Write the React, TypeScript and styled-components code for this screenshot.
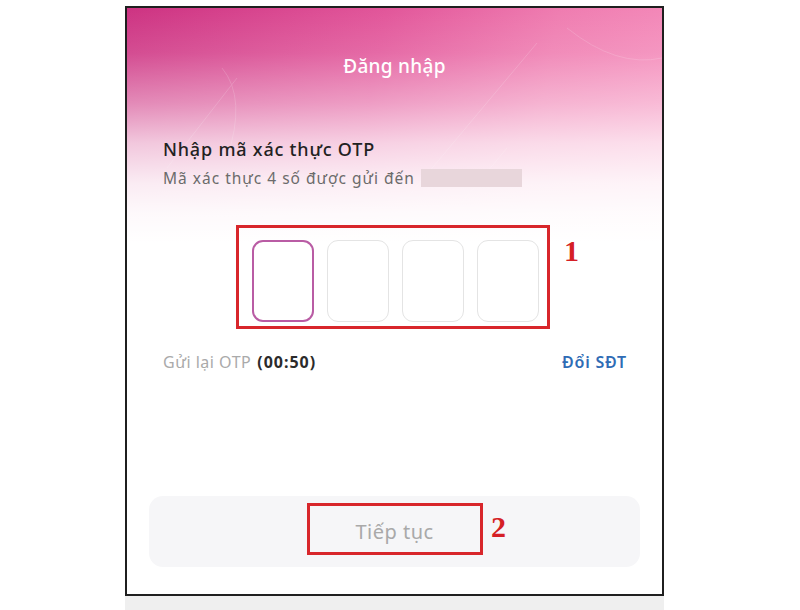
import React from "react";
import styled, { createGlobalStyle } from "styled-components";

const GlobalStyles = createGlobalStyle`
  html, body {
    margin: 0;
    padding: 0;
    background: #ffffff;
  }
  body {
    font-family: "Noto Sans", "Open Sans", sans-serif;
  }
`;

const Page = styled.div`
  width: 800px;
  height: 610px;
  padding: 6px 0 0 125px;
  box-sizing: border-box;
  overflow: hidden;
  display: flex;
  flex-direction: column;
`;

const Phone = styled.div`
  position: relative;
  width: 539px;
  height: 591px;
  box-sizing: border-box;
  border: 2px solid #1f1f1f;
  background-color: #ffffff;
  background-image: linear-gradient(
      to bottom,
      rgba(255, 255, 255, 0) 0px,
      rgba(255, 255, 255, 0.12) 45px,
      rgba(255, 255, 255, 0.42) 95px,
      rgba(255, 255, 255, 0.72) 135px,
      rgba(255, 255, 255, 0.9) 175px,
      rgba(255, 255, 255, 0.97) 205px,
      #ffffff 235px
    ),
    linear-gradient(100deg, #cd3382 0%, #e2569a 45%, #ef7cb0 75%, #f58cbb 100%);
  background-size: 100% 240px, 100% 240px;
  background-repeat: no-repeat;
  display: flex;
  flex-direction: column;
  padding-bottom: 27px;
`;

const BottomStrip = styled.div`
  width: 539px;
  height: 14px;
  background: #efefef;
`;

const Decor = styled.svg`
  position: absolute;
  top: 0;
  left: 0;
  pointer-events: none;
`;

const Title = styled.div`
  margin-top: 46px;
  text-align: center;
  color: #ffffff;
  font-size: 19px;
  letter-spacing: 0.3px;
  line-height: 24px;
  font-weight: 500;
  position: relative;
`;

const Content = styled.div`
  padding: 0 35px 0 36px;
  display: flex;
  flex-direction: column;
  position: relative;
`;

const Heading = styled.div`
  margin-top: 59px;
  font-size: 18px;
  letter-spacing: 0.8px;
  line-height: 24px;
  color: #222222;
  font-weight: 500;
`;

const Sub = styled.div`
  margin-top: 7px;
  display: flex;
  align-items: center;
  gap: 6px;
  font-size: 15.5px;
  letter-spacing: 1px;
  line-height: 20px;
  color: #6b6b6b;
`;

const Masked = styled.span`
  display: inline-block;
  width: 101px;
  height: 18px;
  background: #e8d6db;
`;

const OtpWrap = styled.div`
  position: relative;
  align-self: center;
  margin-top: 52px;
  margin-left: 1px;
  display: flex;
  gap: 13px;
`;

const OtpBox = styled.div<{ $active?: boolean }>`
  width: 62px;
  height: 82px;
  box-sizing: border-box;
  border-radius: 11px;
  border: ${(p) => (p.$active ? "2px solid #b95ca4" : "1.5px solid #e4e4e4")};
  background: #ffffff;
`;

const Annotation = styled.div`
  position: absolute;
  border: 3px solid #d8262b;
  box-sizing: border-box;
  pointer-events: none;
`;

const Marker = styled.span`
  position: absolute;
  font-family: "Liberation Serif", "DejaVu Serif", serif;
  font-weight: 700;
  font-size: 30px;
  line-height: 30px;
  color: #d51f26;
`;

const ResendRow = styled.div`
  margin-top: 29px;
  display: flex;
  justify-content: space-between;
  align-items: center;
  font-size: 16px;
  line-height: 22px;
`;

const Resend = styled.span`
  color: #aaaaaa;
  letter-spacing: 0.5px;
`;

const Timer = styled.span`
  color: #2b2b2b;
  font-weight: 700;
  letter-spacing: 1px;
  margin-left: 6px;
`;

const ChangePhone = styled.span`
  color: #2f6cb5;
  font-weight: 600;
  letter-spacing: 0.8px;
`;

const Button = styled.div`
  position: relative;
  margin: auto 22px 0;
  height: 71px;
  border-radius: 14px;
  background: #f6f6f8;
  display: flex;
  align-items: center;
  justify-content: center;
  font-size: 20px;
  letter-spacing: 0.5px;
  color: #a9a9a9;
`;

const ButtonLabel = styled.span`
  position: relative;
`;

const App: React.FC = () => {
  return (
    <>
      <GlobalStyles />
      <Page>
        <Phone>
          <Decor width="535" height="200" viewBox="0 0 535 200">
            <g stroke="#ffffff" strokeWidth="1" fill="none" opacity="0.16">
              <line x1="40" y1="160" x2="110" y2="70" />
              <line x1="280" y1="190" x2="410" y2="35" />
              <line x1="330" y1="200" x2="380" y2="140" />
              <path d="M95 60 Q 120 90 100 150" />
              <path d="M440 20 Q 490 60 535 50" />
            </g>
          </Decor>
          <Title>Đăng nhập</Title>
          <Content>
            <Heading>Nhập mã xác thực OTP</Heading>
            <Sub>
              Mã xác thực 4 số được gửi đến <Masked />
            </Sub>
            <OtpWrap>
              <OtpBox $active />
              <OtpBox />
              <OtpBox />
              <OtpBox />
              <Annotation style={{ top: -15, left: -16, right: -11, bottom: -7 }} />
              <Marker style={{ top: -4, right: -40 }}>1</Marker>
            </OtpWrap>
            <ResendRow>
              <span>
                <Resend>Gửi lại OTP</Resend>
                <Timer>(00:50)</Timer>
              </span>
              <ChangePhone>Đổi SĐT</ChangePhone>
            </ResendRow>
          </Content>
          <Button>
            <ButtonLabel>Tiếp tục</ButtonLabel>
            <Annotation style={{ top: 7, bottom: 12, left: 158, right: 157 }} />
            <Marker style={{ top: 16, left: 342 }}>2</Marker>
          </Button>
        </Phone>
        <BottomStrip />
      </Page>
    </>
  );
};

export default App;
